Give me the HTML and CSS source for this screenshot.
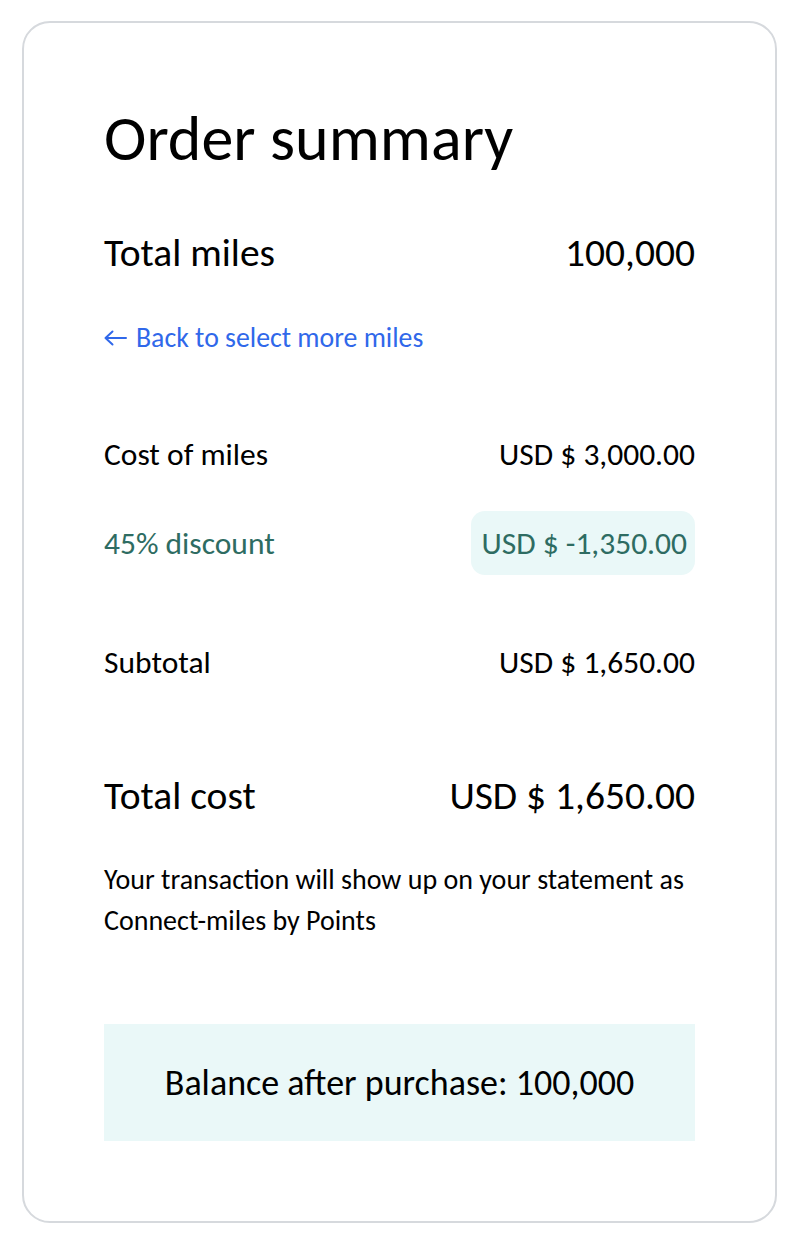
FILE: index.html
```html
<!DOCTYPE html>
<html lang="en">
<head>
<meta charset="utf-8">
<title>Order summary</title>
<link rel="stylesheet" href="styles.css">
</head>
<body>
<section class="card">
  <h1 class="title">Order summary</h1>
  <div class="row row-lg total-miles">
    <span>Total miles</span>
    <span>100,000</span>
  </div>
  <a class="back" href="#">
    <svg class="arrow" width="23" height="16" viewBox="0 0 23 16" aria-hidden="true">
      <path d="M22 8H1.5M8.5 1.5L1.5 8l7 6.5" fill="none" stroke="currentColor" stroke-width="2" stroke-linecap="round" stroke-linejoin="round"/>
    </svg>
    <span>Back to select more miles</span>
  </a>
  <div class="row row-md cost">
    <span>Cost of miles</span>
    <span>USD $ 3,000.00</span>
  </div>
  <div class="row row-md discount">
    <span>45% discount</span>
    <span class="pill">USD $ -1,350.00</span>
  </div>
  <div class="row row-md subtotal">
    <span>Subtotal</span>
    <span>USD $ 1,650.00</span>
  </div>
  <div class="row row-lg total-cost">
    <span>Total cost</span>
    <span>USD $ 1,650.00</span>
  </div>
  <p class="note">Your transaction will show up on your statement as Connect-miles by Points</p>
  <div class="balance">Balance after purchase: 100,000</div>
</section>
</body>
</html>
```

FILE: styles.css
```css
html, body {
  margin: 0;
  padding: 0;
  background: #ffffff;
}
body {
  padding: 21px 25px 17px 22px;
  font-family: "Carlito", "Lato", "Open Sans", sans-serif;
  color: #000000;
}
.card {
  border: 2px solid #d6d9dd;
  border-radius: 28px;
  padding: 80px 80px 80px 80px;
  display: flex;
  flex-direction: column;
}
.title {
  margin: 0;
  font-size: 64px;
  font-weight: 400;
  line-height: 70px;
}
.row {
  display: flex;
  justify-content: space-between;
  align-items: center;
}
.row-lg {
  font-size: 39.5px;
  line-height: 48px;
}
.row-md {
  font-size: 31.5px;
  line-height: 40px;
}
.total-miles { margin-top: 56px; }
.back {
  margin-top: 45px;
  display: flex;
  align-items: center;
  gap: 9px;
  font-size: 27.8px;
  line-height: 32px;
  color: #3068ea;
  text-decoration: none;
}
.arrow { display: block; }
.cost { margin-top: 80px; }
.discount {
  margin-top: 37px;
  color: #2e6c62;
}
.pill {
  background: #eaf8f8;
  border-radius: 14px;
  padding: 0 8px 0 10px;
  line-height: 64px;
}
.subtotal { margin-top: 67px; }
.total-cost { margin-top: 90px; }
.note {
  margin: 39px 0 0 0;
  font-size: 28px;
  line-height: 41px;
}
.balance {
  margin-top: 83px;
  height: 117px;
  background: #eaf8f8;
  display: flex;
  align-items: center;
  justify-content: center;
  font-size: 36px;
}
```
